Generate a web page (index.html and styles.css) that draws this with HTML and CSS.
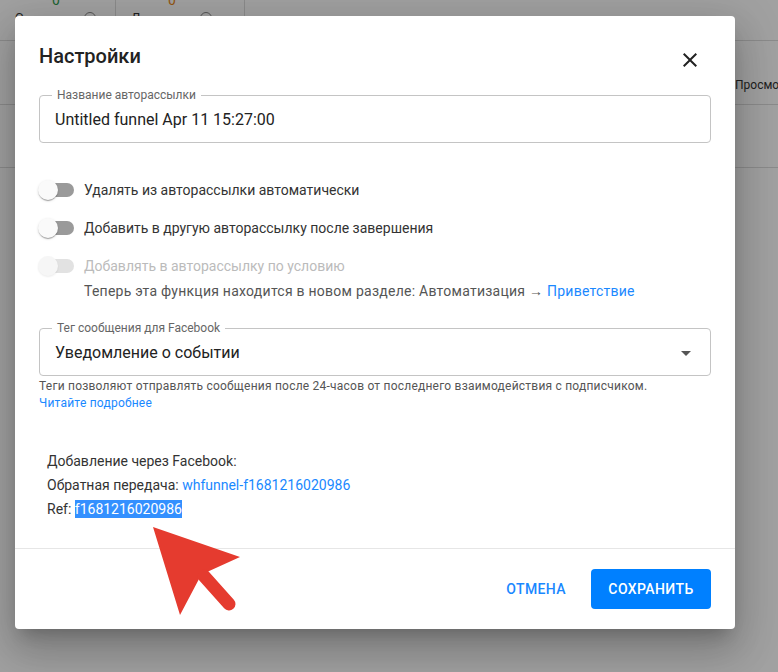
FILE: index.html
```html
<!DOCTYPE html>
<html lang="ru">
<head>
    <meta charset="utf-8">
    <title>Настройки</title>
    <link rel="stylesheet" href="styles.css">
</head>
<body>

<div class="page">
    <div class="stats">
        <div class="stat"><span class="num green">0</span><span class="cap">С</span><span class="ico"></span></div>
        <div class="stat"><span class="num orange">0</span><span class="cap">Д</span><span class="ico"></span></div>
    </div>
    <div class="toolbar"><span class="views">Просмотры</span></div>
    <div class="row_line"></div>
</div>
<div class="overlay"></div>

<div class="dialog">
    <div class="dialog_title">
        <h2>Настройки</h2>
        <svg class="close" width="24" height="24" viewBox="0 0 24 24">
            <path d="M19 6.41 17.59 5 12 10.59 6.41 5 5 6.41 10.59 12 5 17.59 6.41 19 12 13.41 17.59 19 19 17.59 13.41 12z" fill="#222"/>
        </svg>
    </div>

    <div class="dialog_content">
        <div class="outlined">
            <span class="out_label">Название авторассылки</span>
            <span class="out_value">Untitled funnel Apr 11 15:27:00</span>
        </div>

        <div class="switches">
            <label class="sw_row">
                <span class="switch"><span class="track"></span><span class="thumb"></span></span>
                <span class="sw_text">Удалять из авторассылки автоматически</span>
            </label>
            <label class="sw_row">
                <span class="switch"><span class="track"></span><span class="thumb"></span></span>
                <span class="sw_text">Добавить в другую авторассылку после завершения</span>
            </label>
            <label class="sw_row disabled">
                <span class="switch"><span class="track"></span><span class="thumb"></span></span>
                <span class="sw_text">Добавлять в авторассылку по условию</span>
            </label>
            <p class="sw_note">Теперь эта функция находится в новом разделе: Автоматизация → <a href="#">Приветствие</a></p>
        </div>

        <div class="outlined select">
            <span class="out_label">Тег сообщения для Facebook</span>
            <span class="out_value">Уведомление о событии</span>
            <svg class="caret" width="24" height="24" viewBox="0 0 24 24"><path d="M7 10l5 5 5-5z" fill="#555"/></svg>
        </div>
        <p class="helper">Теги позволяют отправлять сообщения после 24-часов от последнего взаимодействия с подписчиком.<br><a href="#">Читайте подробнее</a></p>

        <div class="fb_info">
            <div>Добавление через Facebook:</div>
            <div>Обратная передача: <a href="#">whfunnel-f1681216020986</a></div>
            <div>Ref: <span class="selected">f1681216020986</span></div>
        </div>
    </div>

    <div class="dialog_actions">
        <button type="button" class="btn_text">Отмена</button>
        <button type="button" class="btn_save">Сохранить</button>
    </div>
</div>

<svg class="pointer" width="100" height="110" viewBox="140 515 100 110">
    <polygon points="153,527 180,615 199,579 207,572 240,557" fill="#e53b2f"/>
    <line x1="204" y1="576" x2="229" y2="604" stroke="#e53b2f" stroke-width="13" stroke-linecap="round"/>
</svg>

</body>
</html>
```

FILE: styles.css
```css
body {
    margin: 0;
    width: 778px;
    height: 672px;
    overflow: hidden;
    position: relative;
    font-family: Roboto, "Liberation Sans", sans-serif;
    background: #fff;
}

/* page behind the modal */
.page {
    color: #333;
    font-size: 13px;
}
.stats {
    display: flex;
    height: 40px;
    border-bottom: 1px solid #ddd;
}
.stat {
    width: 128px;
    border-right: 1px solid #ddd;
    position: relative;
}
.stat:first-child { width: 115px; }
.num { position: absolute; top: -8px; left: 52px; font-size: 14px; }
.green { color: #2e9e4f; }
.orange { color: #e8891a; }
.cap { position: absolute; top: 10px; left: 15px; }
.ico {
    position: absolute; top: 12px; left: 84px;
    width: 10px; height: 10px;
    border: 1.5px solid #888; border-radius: 50%;
}
.toolbar {
    height: 63px;
    border-bottom: 1px solid #ddd;
    position: relative;
}
.views { position: absolute; left: 735px; top: 37px; font-size: 12px; color: #333; white-space: nowrap; }
.row_line {
    height: 62px;
    border-bottom: 1px solid #ddd;
}

.overlay {
    position: absolute;
    inset: 0;
    background: rgba(0,0,0,0.37);
}

/* dialog */
.dialog {
    position: absolute;
    left: 15px;
    top: 16px;
    width: 720px;
    background: #fff;
    border-radius: 4px;
    box-shadow: 0 11px 15px -7px rgba(0,0,0,.2), 0 24px 38px 3px rgba(0,0,0,.14), 0 9px 46px 8px rgba(0,0,0,.12);
    color: #333;
}
.dialog_title {
    display: flex;
    align-items: center;
    justify-content: space-between;
    padding: 24px 33px 0 24px;
    height: 32px;
}
.dialog_title h2 {
    margin: 0;
    font-size: 20px;
    font-weight: 500;
    color: #222;
}
.close { margin-top: 8px; }

.dialog_content {
    padding: 23px 24px 27px;
}

.outlined {
    position: relative;
    height: 46px;
    border: 1px solid #c4c4c4;
    border-radius: 4px;
    display: flex;
    align-items: center;
    padding-left: 15px;
}
.out_label {
    position: absolute;
    top: -8px;
    left: 12px;
    padding: 0 5px;
    background: #fff;
    font-size: 12px;
    line-height: 14px;
    color: #666;
}
.out_value {
    font-size: 16px;
    color: #222;
}
.select .caret {
    position: absolute;
    right: 12px;
    top: 12px;
}

.switches {
    padding: 28px 0 27px;
}
.sw_row {
    display: flex;
    align-items: center;
    height: 38px;
    font-size: 14px;
}
.switch {
    position: relative;
    width: 34px;
    height: 14px;
    margin-left: 1px;
}
.track {
    display: block;
    width: 34px;
    height: 14px;
    border-radius: 7px;
    background: #9a9a9a;
}
.thumb {
    position: absolute;
    left: -2px;
    top: -3px;
    width: 20px;
    height: 20px;
    border-radius: 50%;
    background: #fafafa;
    box-shadow: 0 2px 1px -1px rgba(0,0,0,.2), 0 1px 1px 0 rgba(0,0,0,.14), 0 1px 3px 0 rgba(0,0,0,.12);
}
.sw_text { margin-left: 10px; }
.disabled { color: #bbb; }
.disabled .track { background: #e2e2e2; }
.disabled .thumb { background: #f6f6f6; box-shadow: 0 1px 2px rgba(0,0,0,.08); }
.sw_note {
    margin: -4px 0 0 45px;
    font-size: 14px;
    line-height: 20px;
    letter-spacing: 0.25px;
    color: #555;
}

a {
    color: #1a88ff;
    text-decoration: none;
}

.helper {
    margin: 2px 0 0;
    font-size: 12px;
    line-height: 17px;
    letter-spacing: 0.22px;
    color: #555;
}

.fb_info {
    margin-top: 37px;
    padding-left: 8px;
    font-size: 14px;
    line-height: 24px;
    color: #333;
}
.selected {
    background: #3390ff;
    color: #fff;
    padding: 1px 0;
}

.dialog_actions {
    border-top: 1px solid #e6e6e6;
    display: flex;
    justify-content: flex-end;
    gap: 9px;
    padding: 20px 24px 20px;
}
.dialog_actions button {
    height: 40px;
    border: none;
    border-radius: 4px;
    font-family: inherit;
    font-size: 14px;
    font-weight: 500;
    letter-spacing: 0.4px;
    text-transform: uppercase;
}
.btn_text {
    background: none;
    color: #1a88ff;
    padding: 0 16px;
}
.btn_save {
    background: #0080ff;
    color: #fff;
    width: 120px;
}

.pointer {
    position: absolute;
    left: 140px;
    top: 515px;
}
```
